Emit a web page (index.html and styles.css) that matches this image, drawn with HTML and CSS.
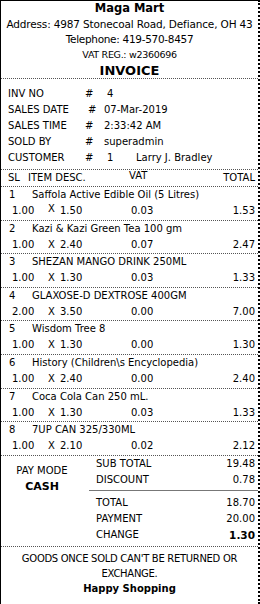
FILE: index.html
```html
<!DOCTYPE html>
<html>
<head>
<meta charset="utf-8">
<link rel="stylesheet" href="styles.css">
</head>
<body>
<div class="receipt">
  <header class="head">
    <div class="shop">Maga Mart</div>
    <div class="addr">Address: 4987 Stonecoal Road, Defiance, OH 43</div>
    <div class="tel">Telephone: 419-570-8457</div>
    <div class="vatreg">VAT REG.: w2360696</div>
    <div class="title">INVOICE</div>
  </header>

  <section class="info">
    <div class="irow"><span class="lbl">INV NO</span><span class="hash">#</span><span class="val v-inv">4</span></div>
    <div class="irow"><span class="lbl">SALES DATE</span><span class="hash hash-r">#</span><span class="val">07-Mar-2019</span></div>
    <div class="irow"><span class="lbl">SALES TIME</span><span class="hash">#</span><span class="val">2:33:42 AM</span></div>
    <div class="irow"><span class="lbl">SOLD BY</span><span class="hash">#</span><span class="val">superadmin</span></div>
    <div class="irow"><span class="lbl">CUSTOMER</span><span class="hash">#</span><span class="val v-inv"><span class="cid">1</span>Larry J. Bradley</span></div>
  </section>

  <div class="cols">
    <span class="c-sl">SL</span><span class="c-desc">ITEM DESC.</span><span class="c-vat">VAT</span><span class="c-tot">TOTAL</span>
  </div>

  <section class="items">
    <div class="item">
      <div class="name"><span class="sl">1</span><span>Saffola Active Edible Oil (5 Litres)</span></div>
      <div class="calc"><span class="qty">1.00</span><span class="x x-up">X</span><span class="price">1.50</span><span class="vat">0.03</span><span class="tot">1.53</span></div>
    </div>
    <div class="item">
      <div class="name"><span class="sl">2</span><span>Kazi &amp; Kazi Green Tea 100 gm</span></div>
      <div class="calc"><span class="qty">1.00</span><span class="x">X</span><span class="price">2.40</span><span class="vat">0.07</span><span class="tot">2.47</span></div>
    </div>
    <div class="item">
      <div class="name"><span class="sl">3</span><span>SHEZAN MANGO DRINK 250ML</span></div>
      <div class="calc"><span class="qty">1.00</span><span class="x">X</span><span class="price">1.30</span><span class="vat">0.03</span><span class="tot">1.33</span></div>
    </div>
    <div class="item">
      <div class="name"><span class="sl">4</span><span>GLAXOSE-D DEXTROSE 400GM</span></div>
      <div class="calc"><span class="qty">2.00</span><span class="x">X</span><span class="price">3.50</span><span class="vat">0.00</span><span class="tot">7.00</span></div>
    </div>
    <div class="item">
      <div class="name"><span class="sl">5</span><span>Wisdom Tree 8</span></div>
      <div class="calc"><span class="qty">1.00</span><span class="x">X</span><span class="price">1.30</span><span class="vat">0.00</span><span class="tot">1.30</span></div>
    </div>
    <div class="item">
      <div class="name"><span class="sl">6</span><span>History (Children\s Encyclopedia)</span></div>
      <div class="calc"><span class="qty">1.00</span><span class="x">X</span><span class="price">2.40</span><span class="vat">0.00</span><span class="tot">2.40</span></div>
    </div>
    <div class="item">
      <div class="name"><span class="sl">7</span><span>Coca Cola Can 250 mL.</span></div>
      <div class="calc"><span class="qty">1.00</span><span class="x">X</span><span class="price">1.30</span><span class="vat">0.03</span><span class="tot">1.33</span></div>
    </div>
    <div class="item">
      <div class="name"><span class="sl">8</span><span>7UP CAN 325/330ML</span></div>
      <div class="calc"><span class="qty">1.00</span><span class="x">X</span><span class="price">2.10</span><span class="vat">0.02</span><span class="tot">2.12</span></div>
    </div>
  </section>

  <section class="totals">
    <div class="paymode">
      <div class="pm-lbl">PAY MODE</div>
      <div class="pm-val">CASH</div>
    </div>
    <div class="sums">
      <div class="srow"><span>SUB TOTAL</span><span>19.48</span></div>
      <div class="srow"><span>DISCOUNT</span><span>0.78</span></div>
      <div class="srule"></div>
      <div class="srow"><span>TOTAL</span><span>18.70</span></div>
      <div class="srow"><span>PAYMENT</span><span>20.00</span></div>
      <div class="srow"><span>CHANGE</span><span class="strong">1.30</span></div>
    </div>
  </section>

  <footer class="foot">
    <div class="note">GOODS ONCE SOLD CAN'T BE RETURNED OR</div>
    <div class="note">EXCHANGE.</div>
    <div class="thanks">Happy Shopping</div>
  </footer>
</div>
</body>
</html>
```

FILE: styles.css
```css
* { box-sizing: border-box; }

html, body {
  margin: 0;
  padding: 0;
  background: #fff;
}

body {
  font-family: "DejaVu Sans", sans-serif;
  font-size: 10px;
  color: #000;
}

.receipt {
  width: 260px;
  height: 604px;
  border-top: 1px solid #000;
  border-left: 1px solid #000;
  border-right: 2px dotted #000;
  overflow: hidden;
}

/* header */
.head {
  display: flex;
  flex-direction: column;
  align-items: center;
  border-bottom: 1px dotted #555;
}
.head > div {
  white-space: nowrap;
  text-align: center;
}
.shop {
  font-weight: bold;
  font-size: 11.5px;
  line-height: 15px;
}
.addr {
  font-size: 10.5px;
  line-height: 16px;
  letter-spacing: -0.15px;
}
.tel {
  font-size: 10.5px;
  line-height: 15px;
  letter-spacing: -0.3px;
}
.vatreg {
  font-size: 9.5px;
  line-height: 16px;
  letter-spacing: -0.3px;
}
.title {
  font-weight: bold;
  font-size: 13px;
  line-height: 15px;
}

/* info */
.info {
  padding: 7px 0 3px 7px;
  border-bottom: 1px dotted #555;
}
.irow {
  display: grid;
  grid-template-columns: 77px 19px 1fr;
  height: 16px;
  line-height: 16px;
  white-space: nowrap;
}
.hash-r { padding-left: 3px; }
.v-inv { padding-left: 3px; }
.cid { display: inline-block; width: 29px; }

/* column headers */
.cols {
  display: grid;
  grid-template-columns: 20px 100px 1fr auto;
  padding: 0 3px 0 7px;
  height: 17px;
  line-height: 16px;
  border-bottom: 1px dotted #555;
}
.c-vat { padding-left: 1px; position: relative; top: -2px; }

/* items */
.item + .item {
  border-top: 1px dotted #555;
}
.name {
  display: grid;
  grid-template-columns: 23px 1fr;
  padding-left: 8px;
  height: 16px;
  line-height: 16px;
  white-space: nowrap;
}
.calc {
  display: grid;
  grid-template-columns: 36px 12px 71px 1fr auto;
  padding: 0 3px 0 11px;
  height: 16.6px;
  line-height: 16px;
  white-space: nowrap;
}
.x-up { position: relative; top: -2px; }

/* totals */
.totals {
  display: grid;
  grid-template-columns: 88px 1fr;
  border-top: 1px dotted #555;
  padding-bottom: 3px;
}
.paymode {
  display: flex;
  flex-direction: column;
  align-items: center;
  padding-top: 7px;
  padding-right: 6px;
}
.pm-lbl { line-height: 16px; }
.pm-val { font-weight: bold; font-size: 11px; line-height: 16px; }
.sums {
  display: flex;
  flex-direction: column;
}
.srow {
  display: flex;
  justify-content: space-between;
  padding: 0 3px 0 7px;
  height: 16px;
  line-height: 16px;
}
.srule {
  border-top: 1px solid #777;
  margin: 2px 0 4px;
}
.strong { font-weight: bold; font-size: 10.5px; }

/* footer */
.foot {
  border-top: 1px dotted #555;
  padding-top: 4px;
  text-align: center;
}
.note {
  line-height: 15px;
  letter-spacing: -0.3px;
}
.thanks {
  font-weight: bold;
  line-height: 16px;
}
```
